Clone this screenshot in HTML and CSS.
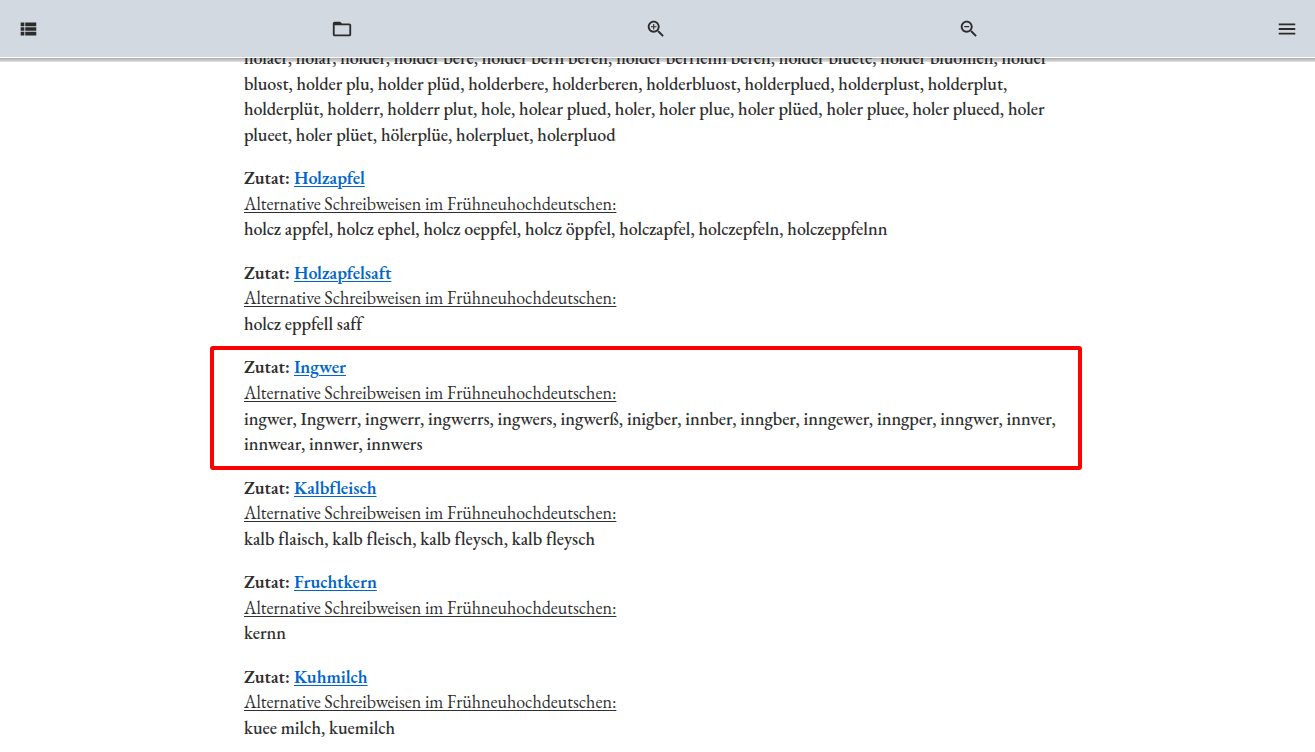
FILE: index.html
```html
<!DOCTYPE html>
<html lang="de">
<head>
<meta charset="utf-8">
<meta name="viewport" content="width=device-width, initial-scale=1">
<title>Zutaten</title>
<link rel="stylesheet" href="styles.css">
</head>
<body>
<header class="toolbar">
  <button class="tool" type="button" aria-label="Inhaltsverzeichnis"><svg class="icon" viewBox="0 0 24 24"><path d="M4 14h4v-4H4v4zm0 5h4v-4H4v4zM4 9h4V5H4v4zm5 5h12v-4H9v4zm0 5h12v-4H9v4zM9 5v4h12V5H9z"/></svg></button>
  <button class="tool" type="button" aria-label="Ordner"><svg class="icon" viewBox="0 0 24 24"><path d="M20 6h-8l-2-2H4c-1.100 0-1.990.9-1.990 2L2 18c0 1.100.9 2 2 2h16c1.100 0 2-.9 2-2V8c0-1.100-.9-2-2-2zm0 12H4V8h16v10z"/></svg></button>
  <button class="tool" type="button" aria-label="Vergrößern"><svg class="icon" viewBox="0 0 24 24"><path d="M15.500 14h-.79l-.28-.27C15.410 12.590 16 11.110 16 9.500 16 5.910 13.090 3 9.500 3S3 5.910 3 9.500 5.910 16 9.500 16c1.610 0 3.090-.59 4.230-1.570l.27.28v.79l5 4.990L20.490 19l-4.990-5zm-6 0C7.010 14 5 11.990 5 9.500S7.010 5 9.500 5 14 7.010 14 9.500 11.990 14 9.500 14zM12.500 10.100h-2.400v2.400H8.900v-2.400H6.500V8.900h2.400V6.500h1.200v2.400h2.400z"/></svg></button>
  <button class="tool" type="button" aria-label="Verkleinern"><svg class="icon" viewBox="0 0 24 24"><path d="M15.500 14h-.79l-.28-.27C15.410 12.590 16 11.110 16 9.500 16 5.910 13.090 3 9.500 3S3 5.910 3 9.500 5.910 16 9.500 16c1.610 0 3.090-.59 4.230-1.570l.27.28v.79l5 4.990L20.490 19l-4.990-5zm-6 0C7.010 14 5 11.990 5 9.500S7.010 5 9.500 5 14 7.010 14 9.500 11.990 14 9.500 14zM6.800 8.800h5.400v1.400H6.800z"/></svg></button>
  <button class="tool menu" type="button" aria-label="Menü"><svg class="icon" viewBox="0 0 24 24"><path d="M3 18h18v-2H3v2zm0-5h18v-2H3v2zm0-7v2h18V6H3z"/></svg></button>
</header>
<main class="content">
  <p class="entry">holaer, holar, holder, holder bere, holder bern beren, holder berrienn beren, holder bluete, holder bluomen, holder<br>bluost, holder plu, holder plüd, holderbere, holderberen, holderbluost, holderplued, holderplust, holderplut,<br>holderplüt, holderr, holderr plut, hole, holear plued, holer, holer plue, holer plüed, holer pluee, holer plueed, holer<br>plueet, holer plüet, hölerplüe, holerpluet, holerpluod</p>
  <p class="entry"><strong>Zutat: <a class="link" href="#">Holzapfel</a></strong><br><u class="label">Alternative Schreibweisen im Frühneuhochdeutschen:</u><br>holcz appfel, holcz ephel, holcz oeppfel, holcz öppfel, holczapfel, holczepfeln, holczeppfelnn</p>
  <p class="entry"><strong>Zutat: <a class="link" href="#">Holzapfelsaft</a></strong><br><u class="label">Alternative Schreibweisen im Frühneuhochdeutschen:</u><br>holcz eppfell saff</p>
  <p class="entry marked"><strong>Zutat: <a class="link" href="#">Ingwer</a></strong><br><u class="label">Alternative Schreibweisen im Frühneuhochdeutschen:</u><br>ingwer, Ingwerr, ingwerr, ingwerrs, ingwers, ingwerß, inigber, innber, inngber, inngewer, inngper, inngwer, innver,<br>innwear, innwer, innwers</p>
  <p class="entry"><strong>Zutat: <a class="link" href="#">Kalbfleisch</a></strong><br><u class="label">Alternative Schreibweisen im Frühneuhochdeutschen:</u><br>kalb flaisch, kalb fleisch, kalb fleysch, kalb fleysch</p>
  <p class="entry"><strong>Zutat: <a class="link" href="#">Fruchtkern</a></strong><br><u class="label">Alternative Schreibweisen im Frühneuhochdeutschen:</u><br>kernn</p>
  <p class="entry"><strong>Zutat: <a class="link" href="#">Kuhmilch</a></strong><br><u class="label">Alternative Schreibweisen im Frühneuhochdeutschen:</u><br>kuee milch, kuemilch</p>
</main>
</body>
</html>
```
FILE: styles.css
```css
* { box-sizing: border-box; }

body {
  margin: 0;
  background: #fff;
  color: #2f2f2f;
  font-family: "EB Garamond", "Liberation Serif", serif;
  font-size: 18px;
  font-weight: 500;
  line-height: 1.42;
}

.toolbar {
  position: fixed;
  top: 0;
  left: 0;
  right: 0;
  z-index: 2;
  display: flex;
  align-items: center;
  justify-content: space-between;
  height: 58px;
  padding: 0 17px;
  background: #d2d9e0;
  border-bottom: 1px solid #fff;
}

.toolbar::after {
  content: "";
  position: absolute;
  top: 100%;
  left: 0;
  right: 0;
  height: 4px;
  margin-top: 1px;
  background: linear-gradient(rgba(0, 0, 0, 0.32), rgba(0, 0, 0, 0.12));
}

.tool {
  display: flex;
  padding: 0;
  border: 0;
  background: none;
  color: #2b2b2b;
  cursor: pointer;
}

.menu { margin-left: 4px; }

.icon {
  width: 22px;
  height: 22px;
  fill: currentColor;
}

.content {
  max-width: 859px;
  margin: 0 auto;
  padding: 45px 16px 0;
}

.entry { margin: 0 0 18px; }

.entry strong { font-weight: 600; }

.marked { position: relative; }

.marked::before {
  content: "";
  position: absolute;
  inset: -8px -11px -13px -34px;
  border: 4px solid #f00;
  border-radius: 3px;
  pointer-events: none;
}

.link { color: #0066cc; }

.label { font-weight: 400; }

.link,
.label { text-underline-offset: 2px; text-decoration-thickness: 1px; }
```
